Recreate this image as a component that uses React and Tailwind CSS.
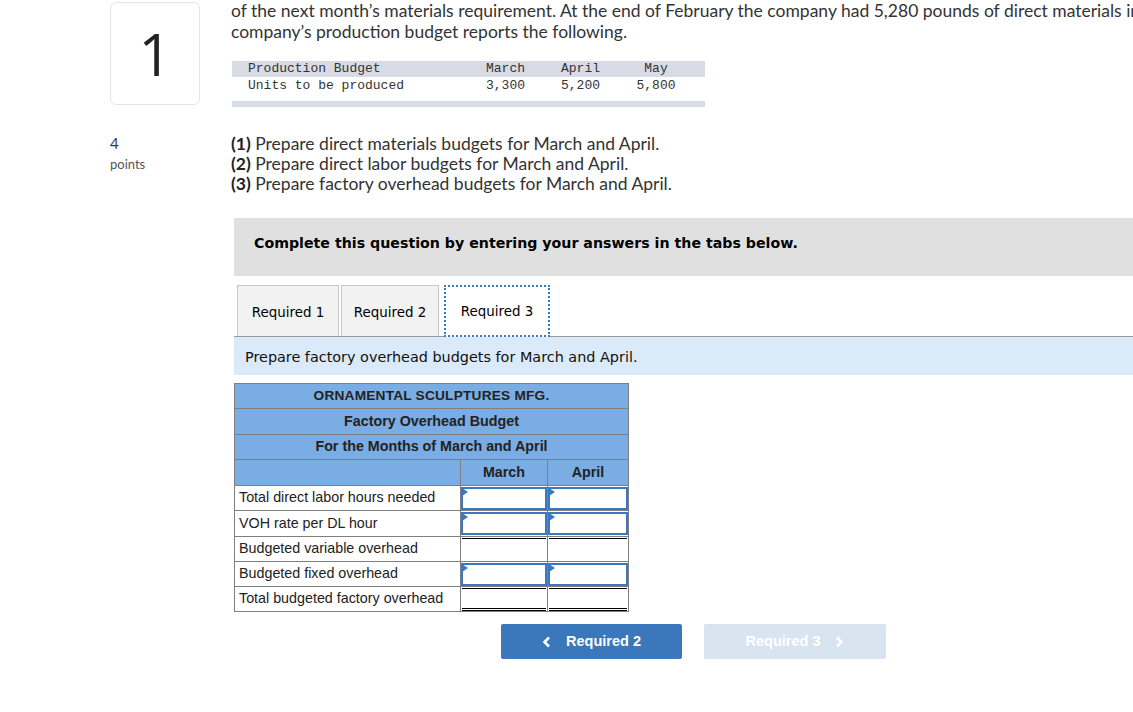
import React from 'react';

const sans = { fontFamily: 'Lato, "Open Sans", sans-serif' };

const rows = [
  { label: 'Total direct labor hours needed', input: true, h: 'h-[25px]' },
  { label: 'VOH rate per DL hour', input: true, h: 'h-[26px]' },
  { label: 'Budgeted variable overhead', input: false, top: true, h: 'h-[25px]' },
  { label: 'Budgeted fixed overhead', input: true, h: 'h-[25px]' },
  { label: 'Total budgeted factory overhead', input: false, total: true, h: 'h-[25px]' },
];

const InputCell = ({ last, h }) => (
  <td className={`${h} p-0 border border-[#7f7f7f] ${last ? 'w-[81px]' : 'w-[87px]'}`}>
    <div className="relative h-[23px] border-2 border-[#3b78c0] bg-white">
      <div className="absolute left-[-1px] top-[-1px] w-0 h-0 border-t-[4px] border-b-[4px] border-l-[6px] border-t-transparent border-b-transparent border-l-[#3b78c0]" />
    </div>
  </td>
);

const PlainCell = ({ top, total, last, h }) => (
  <td className={`${h} p-0 border border-[#7f7f7f] ${last ? 'w-[81px]' : 'w-[87px]'}`}>
    <div
      className={`h-[23px] mx-[1px] ${top ? 'border-t border-black' : ''} ${total ? 'border-t border-black border-b-[3px] border-b-black border-double' : ''}`}
    />
  </td>
);

export default function App() {
  return (
    <div className="w-[1133px] h-[712px] bg-white overflow-hidden flex" style={sans}>
      <div className="w-[231px] shrink-0 pl-[110px] pt-[2px]">
        <div className="w-[90px] h-[103px] rounded-md border border-[#e5e5e5] flex items-center justify-center">
          <span className="text-[58px] font-medium leading-none text-[#222]" style={{ fontFamily: '"Open Sans", sans-serif' }}>1</span>
        </div>
        <div className="mt-[29px] text-[15px] text-[#2d3a4f] leading-[18px]">4</div>
        <div className="text-[13px] text-[#555] leading-[16px] mt-[4px]">points</div>
      </div>

      <div className="flex-1 min-w-0">
        <p className="text-[17.5px] leading-[21px] text-[#333] whitespace-nowrap">
          of the next month’s materials requirement. At the end of February the company had 5,280 pounds of direct materials in
          <br />
          company’s production budget reports the following.
        </p>

        <div className="mt-[19px] w-[473px] ml-[1px] text-[13px] text-[#333]" style={{ fontFamily: '"Liberation Mono", monospace' }}>
          <div className="bg-[#d8dbe6] h-[16px] flex items-center">
            <span className="w-[254px] pl-[16px]">Production Budget</span>
            <span className="w-[75px]">March</span>
            <span className="w-[75px]">April</span>
            <span className="w-[40px] text-center">May</span>
          </div>
          <div className="h-[18px] flex items-center">
            <span className="w-[254px] pl-[16px]">Units to be produced</span>
            <span className="w-[75px]">3,300</span>
            <span className="w-[75px]">5,200</span>
            <span className="w-[40px] text-center">5,800</span>
          </div>
          <div className="mt-[6px] h-[6px] bg-[#d8dbe6]" />
        </div>

        <div className="mt-[27px] text-[17.5px] leading-[20px] text-[#333]">
          <p><b className="text-[#222]">(1)</b> Prepare direct materials budgets for March and April.</p>
          <p><b className="text-[#222]">(2)</b> Prepare direct labor budgets for March and April.</p>
          <p><b className="text-[#222]">(3)</b> Prepare factory overhead budgets for March and April.</p>
        </div>

        <div className="mt-[24px] ml-[3px] h-[58px] bg-[#e0e0e0] flex items-center pl-[20px] pb-[6px]">
          <span className="text-[14.2px] font-bold text-black" style={{ fontFamily: '"DejaVu Sans", Verdana, sans-serif' }}>
            Complete this question by entering your answers in the tabs below.
          </span>
        </div>

        <div className="ml-[3px]" style={{ fontFamily: '"DejaVu Sans", Verdana, sans-serif' }}>
          <div className="mt-[9px] flex items-end border-b border-[#999] h-[52px]">
            <div className="ml-[3px] w-[102px] h-[51px] pt-[4px] bg-[#f2f2f2] border border-b-0 border-[#c8c8c8] flex items-center justify-center text-[13.4px] text-black">Required 1</div>
            <div className="ml-[2px] w-[98px] h-[51px] pt-[4px] bg-[#f2f2f2] border border-b-0 border-[#c8c8c8] flex items-center justify-center text-[13.4px] text-black">Required 2</div>
            <div className="ml-[5px] w-[106px] h-[52px] pt-[3px] bg-white border-2 border-dotted border-[#3b78c0] mb-[-1px] flex items-center justify-center text-[13.4px] text-black">Required 3</div>
          </div>
          <div className="h-[38px] pt-[4px] bg-[#dbeaf8] flex items-center pl-[11px] text-[14.4px] text-[#111]">
            Prepare factory overhead budgets for March and April.
          </div>
        </div>

        <table className="mt-[8px] ml-[3px] border-collapse text-[#222]" style={{ fontFamily: '"Liberation Sans", Arial, sans-serif' }}>
          <tbody>
            <tr>
              <td colSpan={3} className="h-[25px] bg-[#7aade3] border border-[#7f7f7f] text-center font-bold text-[13.7px] tracking-[0.2px] p-0">
                ORNAMENTAL SCULPTURES MFG.
              </td>
            </tr>
            <tr>
              <td colSpan={3} className="h-[26px] bg-[#7aade3] border border-[#7f7f7f] text-center font-bold text-[14.3px] p-0">
                Factory Overhead Budget
              </td>
            </tr>
            <tr>
              <td colSpan={3} className="h-[25px] bg-[#7aade3] border border-[#7f7f7f] text-center font-bold text-[14.3px] p-0">
                For the Months of March and April
              </td>
            </tr>
            <tr>
              <td className="h-[26px] w-[226px] bg-[#7aade3] border border-[#7f7f7f] p-0" />
              <td className="h-[26px] w-[87px] bg-[#7aade3] border border-[#7f7f7f] text-center font-bold text-[14.3px] p-0">March</td>
              <td className="h-[26px] w-[81px] bg-[#7aade3] border border-[#7f7f7f] text-center font-bold text-[14.3px] p-0">April</td>
            </tr>
            {rows.map(r => (
              <tr key={r.label}>
                <td className={`${r.h} w-[226px] border border-[#7f7f7f] pl-[4px] text-[14.3px] p-0 text-[#222]`}>{r.label}</td>
                {r.input ? <InputCell h={r.h} /> : <PlainCell h={r.h} top={r.top} total={r.total} />}
                {r.input ? <InputCell h={r.h} last /> : <PlainCell h={r.h} top={r.top} total={r.total} last />}
              </tr>
            ))}
          </tbody>
        </table>

        <div className="mt-[12px] ml-[270px] flex gap-[22px]" style={{ fontFamily: '"Liberation Sans", Arial, sans-serif' }}>
          <button className="w-[181px] h-[35px] rounded-[2px] bg-[#3a77bb] text-white font-bold text-[14.5px] flex items-center justify-center gap-[14px]">
            <svg width="10" height="12" viewBox="0 0 10 12"><path d="M7 1.5 L2.5 6 L7 10.5" stroke="white" strokeWidth="2.6" fill="none" /></svg>
            Required 2
          </button>
          <button className="w-[182px] h-[35px] rounded-[2px] bg-[#d9e4f1] text-white font-bold text-[14.5px] flex items-center justify-center gap-[14px]">
            Required 3
            <svg width="10" height="12" viewBox="0 0 10 12"><path d="M3 1.5 L7.5 6 L3 10.5" stroke="white" strokeWidth="2.6" fill="none" /></svg>
          </button>
        </div>
      </div>
    </div>
  );
}
